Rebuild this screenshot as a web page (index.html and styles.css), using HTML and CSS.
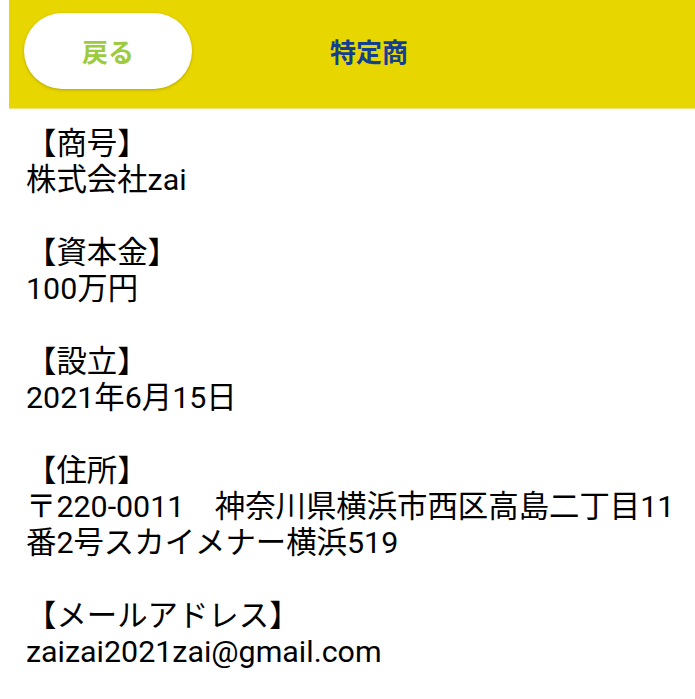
FILE: index.html
```html
<!DOCTYPE html>
<html lang="ja">
<head>
<meta charset="utf-8">
<title>特定商</title>
<link rel="stylesheet" href="styles.css">
</head>
<body class="page">
  <header class="topbar">
    <button class="back-btn" type="button">戻る</button>
    <h1 class="title">特定商</h1>
  </header>
  <main class="info">
    <section class="item">
      <div class="label">【商号】</div>
      <div class="value">株式会社zai</div>
    </section>
    <section class="item">
      <div class="label">【資本金】</div>
      <div class="value">100万円</div>
    </section>
    <section class="item">
      <div class="label">【設立】</div>
      <div class="value">2021年6月15日</div>
    </section>
    <section class="item">
      <div class="label">【住所】</div>
      <div class="value">〒220-0011　神奈川県横浜市西区高島二丁目11番2号スカイメナー横浜519</div>
    </section>
    <section class="item">
      <div class="label">【メールアドレス】</div>
      <div class="value">zaizai2021zai@gmail.com</div>
    </section>
  </main>
</body>
</html>
```

FILE: styles.css
```css
html, body {
  margin: 0;
  padding: 0;
  background: #ffffff;
}

.page {
  padding-left: 9px;
  font-family: "Roboto", "Noto Sans CJK JP", sans-serif;
  color: #000000;
  overflow: hidden;
}

.topbar {
  box-sizing: border-box;
  height: 108px;
  background: #e8d600;
  display: flex;
  align-items: flex-start;
  padding: 13px 0 0 15px;
  box-shadow: 0 1px 0 #efe270;
}

.back-btn {
  width: 168px;
  height: 76px;
  border: none;
  border-radius: 38px;
  background: #ffffff;
  box-shadow: 0 1px 3px rgba(120, 110, 0, 0.45);
  color: #9ccc3e;
  font-family: "Noto Sans CJK JP", sans-serif;
  font-weight: 700;
  font-size: 26px;
  line-height: 76px;
  padding: 0;
  margin: 0;
}

.title {
  margin: 0 0 0 138px;
  height: 76px;
  line-height: 76px;
  font-family: "Noto Sans CJK JP", sans-serif;
  font-weight: 700;
  font-size: 26px;
  color: #123f8e;
}

.info {
  padding: 18px 8px 0 17px;
  font-size: 30.4px;
  line-height: 36.3px;
}

.item {
  margin: 0 0 36.3px 0;
}

.label,
.value {
  margin: 0;
}
```
